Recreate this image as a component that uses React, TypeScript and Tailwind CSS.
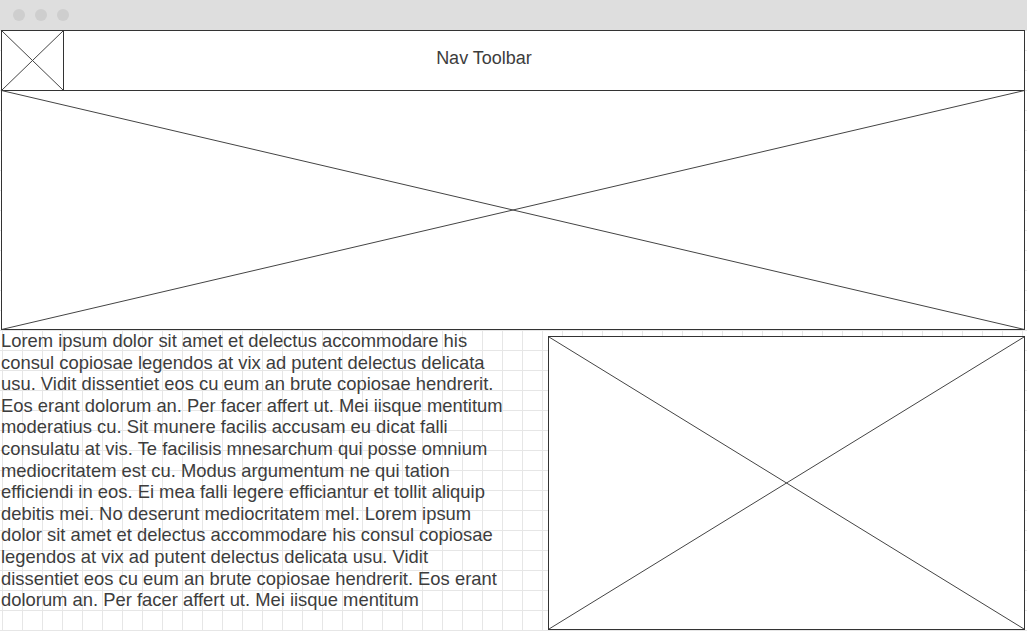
import React from 'react';

const lorem =
  'Lorem ipsum dolor sit amet et delectus accommodare his consul copiosae legendos at vix ad putent delectus delicata usu. Vidit dissentiet eos cu eum an brute copiosae hendrerit. Eos erant dolorum an. Per facer affert ut. Mei iisque mentitum moderatius cu. Sit munere facilis accusam eu dicat falli consulatu at vis. Te facilisis mnesarchum qui posse omnium mediocritatem est cu. Modus argumentum ne qui tation efficiendi in eos. Ei mea falli legere efficiantur et tollit aliquip debitis mei. No deserunt mediocritatem mel. Lorem ipsum dolor sit amet et delectus accommodare his consul copiosae legendos at vix ad putent delectus delicata usu. Vidit dissentiet eos cu eum an brute copiosae hendrerit. Eos erant dolorum an. Per facer affert ut. Mei iisque mentitum';

// placeholder cross drawn edge to edge
const Cross: React.FC = () => (
  <svg className="absolute inset-0 w-full h-full" viewBox="0 0 100 100" preserveAspectRatio="none">
    <line x1="0" y1="0" x2="100" y2="100" stroke="#444" strokeWidth="1" vectorEffect="non-scaling-stroke" />
    <line x1="100" y1="0" x2="0" y2="100" stroke="#444" strokeWidth="1" vectorEffect="non-scaling-stroke" />
  </svg>
);

const App: React.FC = () => {
  return (
    <div className="w-[1027px] h-[631px] overflow-hidden bg-white font-['Liberation_Sans',Arial,sans-serif] text-[#3d3d3d]">
      {/* window chrome */}
      <div className="h-[30px] bg-[#dedede] flex items-center gap-[10px] pl-[13px]">
        <div className="w-[12px] h-[12px] rounded-full bg-[#cecece]" />
        <div className="w-[12px] h-[12px] rounded-full bg-[#cecece]" />
        <div className="w-[12px] h-[12px] rounded-full bg-[#cecece]" />
      </div>

      <div className="h-[601px] px-[1px] bg-[linear-gradient(to_right,#e6e6e6_1px,transparent_1px),linear-gradient(to_bottom,#e6e6e6_1px,transparent_1px)] bg-[size:20px_20px] bg-[position:2px_0px]">
        {/* nav toolbar */}
        <div className="h-[61px] w-[1024px] border border-[#333] bg-white flex">
          <div className="relative w-[62px] h-full border-r border-[#333]">
            <Cross />
          </div>
          <div className="flex-1 flex items-center justify-center pr-[120px] pb-[5px] text-[18px]">Nav Toolbar</div>
        </div>

        {/* hero */}
        <div className="relative h-[239px] w-[1024px] border border-t-0 border-[#333] bg-white">
          <svg className="absolute left-[-1px] top-[-1px] w-[1024px] h-[240px]" viewBox="0 0 1024 240" preserveAspectRatio="none">
            <line x1="0.5" y1="0.5" x2="1023.5" y2="239.5" stroke="#444" strokeWidth="1" />
            <line x1="1023.5" y1="0.5" x2="0.5" y2="239.5" stroke="#444" strokeWidth="1" />
          </svg>
        </div>

        {/* content row */}
        <div className="flex items-start">
          <p className="w-[506px] text-[18.4px] leading-[21.6px]">{lorem}</p>
          <div className="relative ml-[41px] mt-[6px] w-[477px] h-[294px] border border-[#333] bg-white">
            <Cross />
          </div>
        </div>
      </div>
    </div>
  );
};

export default App;
